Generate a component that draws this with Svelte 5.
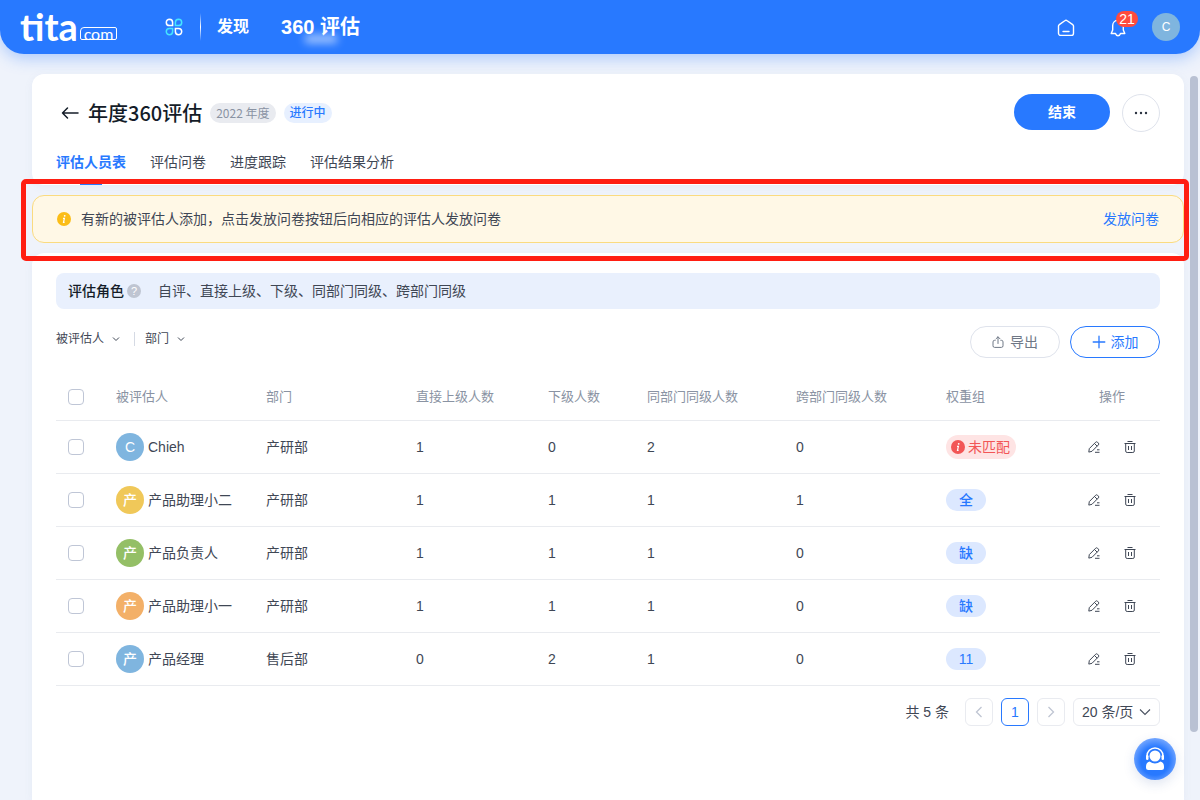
<script lang="ts">
	interface Person {
		name: string;
		initial: string;
		color: string;
		dept: string;
		counts: number[];
		group: string;
	}

	const tabs = ['评估人员表', '评估问卷', '进度跟踪', '评估结果分析'];
	const filters = ['被评估人', '部门'];
	const columns = ['被评估人', '部门', '直接上级人数', '下级人数', '同部门同级人数', '跨部门同级人数', '权重组'];

	const people: Person[] = [
		{ name: 'Chieh', initial: 'C', color: '#7fb5df', dept: '产研部', counts: [1, 0, 2, 0], group: '' },
		{ name: '产品助理小二', initial: '产', color: '#f0c859', dept: '产研部', counts: [1, 1, 1, 1], group: '全' },
		{ name: '产品负责人', initial: '产', color: '#94bf66', dept: '产研部', counts: [1, 1, 1, 0], group: '缺' },
		{ name: '产品助理小一', initial: '产', color: '#f3b068', dept: '产研部', counts: [1, 1, 1, 0], group: '缺' },
		{ name: '产品经理', initial: '产', color: '#7fb5df', dept: '售后部', counts: [0, 2, 1, 0], group: '11' },
	];

	let activeTab = $state(0);
	let selected: boolean[] = $state(people.map(() => false));
	let allSelected = $derived(selected.every(Boolean));

	function toggleAll() {
		const next = !allSelected;
		selected = selected.map(() => next);
	}
</script>

{#snippet chevron()}
	<svg class="chevron" width="8" height="8" viewBox="0 0 8 8" fill="none" stroke="currentColor"><path d="M1 2.5l3 3 3-3" /></svg>
{/snippet}

{#snippet infoDot(color)}
	<svg width="14" height="14" viewBox="0 0 14 14">
		<circle cx="7" cy="7" r="7" fill={color} />
		<circle cx="7.7" cy="3.8" r=".9" fill="#fff" />
		<path d="M6 6.3h1.4L6.500 10.3h1.1" fill="none" stroke="#fff" stroke-width="1.2" />
	</svg>
{/snippet}

<header class="topbar">
	<a class="logo" href="#home" aria-label="tita.com"><span class="logo-name">tita</span><span class="logo-com">com</span></a>
	<button class="icon-btn apps" aria-label="应用">
		<svg width="18" height="18" viewBox="0 0 18 18" fill="none" stroke-width="1.5">
			<path d="M4.5 1.2a3.2 3.2 0 1 0 0 6.4h3.1V4.4a3.2 3.2 0 0 0-3.1-3.2z" stroke="#fff" />
			<path d="M13.5 1.2a3.2 3.2 0 1 1 0 6.4h-3.1V4.4a3.2 3.2 0 0 1 3.1-3.2z" stroke="#45e5ff" />
			<path d="M4.5 16.8a3.2 3.2 0 1 1 0-6.4h3.1v3.2a3.2 3.2 0 0 1-3.1 3.2z" stroke="#45e5ff" />
			<path d="M13.5 16.8a3.2 3.2 0 1 0 0-6.4h-3.1v3.2a3.2 3.2 0 0 0 3.1 3.2z" stroke="#fff" />
		</svg>
	</button>
	<span class="topbar-line"></span>
	<nav class="topnav">
		<a href="#discover">发现</a>
		<a class="current" href="#review">360 评估</a>
	</nav>
	<div class="topbar-right">
		<button class="icon-btn" aria-label="主页">
			<svg width="18" height="20" viewBox="0 -2 18 20" fill="none" stroke="#fff" stroke-width="1.4" stroke-linecap="round" stroke-linejoin="round">
				<path d="M7.8 1.7L2.3 5.6a1.8 1.8 0 0 0-.8 1.5v7.1a2.2 2.2 0 0 0 2.2 2.2h10.6a2.2 2.2 0 0 0 2.2-2.2V7.1a1.8 1.8 0 0 0-.8-1.5L10.2 1.7a2 2 0 0 0-2.4 0z" />
				<path d="M6 12.5h6" />
			</svg>
		</button>
		<button class="icon-btn bell" aria-label="通知">
			<svg width="18" height="20" viewBox="0 -2 18 20" fill="none" stroke="#fff" stroke-width="1.4" stroke-linecap="round" stroke-linejoin="round">
				<path d="M9 1.3c-3.3 0-5.3 2.4-5.3 5.3v4.4L2.2 14.5h4.3c.4 1.4 1.3 2.2 2.5 2.2s2.1-.8 2.5-2.2h4.3L14.3 11V6.6c0-2.9-2-5.3-5.3-5.3z" />
			</svg>
			<span class="badge">21</span>
		</button>
		<span class="me">C</span>
	</div>
</header>

<main>
	<section class="card head-card">
		<div class="title-row">
			<button class="icon-btn" aria-label="返回">
				<svg width="18" height="14" viewBox="0 0 18 14" fill="none" stroke="#141c28" stroke-width="1.5" stroke-linecap="round" stroke-linejoin="round"><path d="M17 7H1.5M6.5 2L1.5 7l5 5" /></svg>
			</button>
			<h1>年度360评估</h1>
			<span class="tag grey">2022 年度</span>
			<span class="tag blue">进行中</span>
			<div class="title-actions">
				<button class="btn-primary">结束</button>
				<button class="btn-more" aria-label="更多">
					<svg width="14" height="4" viewBox="0 0 14 4" fill="#2b3340"><circle cx="2" cy="2" r="1.2" /><circle cx="7" cy="2" r="1.2" /><circle cx="12" cy="2" r="1.2" /></svg>
				</button>
			</div>
		</div>
		<nav class="tabs">
			{#each tabs as tab, i}
				<button class:active={activeTab === i} onclick={() => (activeTab = i)}>{tab}</button>
			{/each}
		</nav>
	</section>

	<div class="notice-wrap">
		<div class="notice">
			{@render infoDot('#fbbd17')}
			<span>有新的被评估人添加，点击发放问卷按钮后向相应的评估人发放问卷</span>
			<a href="#send">发放问卷</a>
		</div>
		<div class="highlight"></div>
	</div>

	<section class="card body-card">
		<div class="roles">
			<strong>评估角色</strong>
			<span class="help">?</span>
			<span>自评、直接上级、下级、同部门同级、跨部门同级</span>
		</div>

		<div class="toolbar">
			<div class="filters">
				{#each filters as filter}
					<button>{filter}{@render chevron()}</button>
				{/each}
			</div>
			<div class="actions">
				<button class="btn-outline">
					<svg width="12" height="12" viewBox="0 0 12 12" fill="none" stroke="currentColor" stroke-linecap="round" stroke-linejoin="round"><path d="M3.2 4.300H2.600A1.600 1.600 0 0 0 1 5.900v3.900a1.600 1.600 0 0 0 1.600 1.600h6.800A1.600 1.600 0 0 0 11 9.800V5.900a1.600 1.600 0 0 0-1.600-1.600h-.6M6 7.500V.9M4 2.800l2-2 2 2" /></svg>
					导出
				</button>
				<button class="btn-outline add">
					<svg width="14" height="14" viewBox="0 0 14 14" stroke="currentColor" stroke-width="1.3" stroke-linecap="round"><path d="M7 1.2v11.600M1.2 7h11.600" /></svg>
					添加
				</button>
			</div>
		</div>

		<table>
			<colgroup>
				<col class="w-check" />
				<col class="w-name" />
				<col class="w-dept" />
				<col class="w-up" />
				<col class="w-down" />
				<col class="w-peer" />
				<col class="w-cross" />
				<col class="w-group" />
				<col class="w-ops" />
			</colgroup>
			<thead>
				<tr>
					<th class="check"><input type="checkbox" aria-label="全选" checked={allSelected} onchange={toggleAll} /></th>
					{#each columns as column}
						<th>{column}</th>
					{/each}
					<th class="ops-head">操作</th>
				</tr>
			</thead>
			<tbody>
				{#each people as person, i}
					<tr>
						<td class="check"><input type="checkbox" aria-label={person.name} bind:checked={selected[i]} /></td>
						<td>
							<div class="person">
								<span class="avatar" style="background: {person.color}">{person.initial}</span>
								{person.name}
							</div>
						</td>
						<td>{person.dept}</td>
						{#each person.counts as count}
							<td>{count}</td>
						{/each}
						<td>
							{#if person.group}
								<span class="pill">{person.group}</span>
							{:else}
								<span class="pill unmatched">{@render infoDot('#f25656')}未匹配</span>
							{/if}
						</td>
						<td>
							<div class="ops">
								<button class="icon-btn" aria-label="编辑">
									<svg width="12" height="12" viewBox="0 0 12 12" fill="none" stroke="#3f4755" stroke-linejoin="round"><path d="M.8 11.100l.5-3.500L7.700 1.200a1.300 1.300 0 0 1 1.800 0l.9.9a1.300 1.300 0 0 1 0 1.800L4 10.300zM6.500 2.500l2.700 2.700M7 11.300h4.500M9 8.800h2.500" /></svg>
								</button>
								<button class="icon-btn" aria-label="删除">
									<svg width="12" height="12" viewBox="0 0 12 12" fill="none" stroke="#3f4755"><path d="M.5 2.500h11M3.500.5h5M1.700 2.500V10a1.500 1.500 0 0 0 1.500 1.500h5.600a1.500 1.500 0 0 0 1.500-1.500V2.500M4.500 5v4M7.500 5v4" /></svg>
								</button>
							</div>
						</td>
					</tr>
				{/each}
			</tbody>
		</table>

		<div class="pager">
			<span class="total">共 5 条</span>
			<button aria-label="上一页" disabled>
				<svg width="12" height="12" viewBox="0 0 12 12" fill="none" stroke="currentColor" stroke-width="1.3"><path d="M8.500 1L3.500 6l5 5" /></svg>
			</button>
			<button class="active">1</button>
			<button aria-label="下一页" disabled>
				<svg width="12" height="12" viewBox="0 0 12 12" fill="none" stroke="currentColor" stroke-width="1.3"><path d="M3.500 1l5 5-5 5" /></svg>
			</button>
			<div class="size">
				<select aria-label="每页条数">
					<option>20 条/页</option>
					<option>50 条/页</option>
				</select>
				<svg width="12" height="12" viewBox="0 0 12 12" fill="none" stroke="#4a5260" stroke-width="1.1"><path d="M1 3.500l5 5 5-5" /></svg>
			</div>
		</div>
	</section>
</main>

<div class="scrollbar"></div>

<button class="service" aria-label="客服">
	<svg width="20" height="24" viewBox="0 0 20 24" fill="none">
		<path d="M2 10V9a8 8 0 0 1 16 0v1" stroke="#fff" stroke-width="1.5" />
		<rect x="1" y="8" width="2.5" height="5" rx="1.2" fill="#fff" />
		<rect x="16.5" y="8" width="2.5" height="5" rx="1.2" fill="#fff" />
		<circle cx="10" cy="9" r="5.500" fill="#fff" />
		<path d="M4.500 14.500q5.500 4 11 0 3.500 1 3.500 5v1q0 2.500-2.500 2.500h-13Q1 23 1 20.500v-1q0-4 3.500-5z" fill="#fff" />
	</svg>
</button>

<style>
	:global(body) {
		background: #eff3fb;
		color: #3f4755;
		font: 14px/20px 'Liberation Sans', 'Noto Sans CJK SC', sans-serif;
	}

	:global(#app) {
		min-height: 100vh;
		display: flex;
		flex-direction: column;
	}

	* {
		box-sizing: border-box;
	}

	button,
	select {
		font: inherit;
		color: inherit;
		background: none;
		border: 0;
		padding: 0;
		cursor: pointer;
	}

	a {
		text-decoration: none;
	}

	svg {
		display: block;
		flex: none;
	}

	.icon-btn {
		display: flex;
	}

	.topbar {
		display: flex;
		align-items: center;
		height: 54px;
		padding: 0 20px;
		background: #2879ff;
		border-radius: 0 0 24px 24px;
		box-shadow: 0 4px 16px rgba(40, 121, 255, 0.35);
		color: #fff;
	}

	.logo {
		display: flex;
		align-items: flex-end;
		justify-content: space-between;
		width: 97px;
		height: 25px;
		color: #fff;
	}

	.logo-name {
		font: 700 38px/28px Lato, sans-serif;
	}

	.logo-com {
		width: 37px;
		border: 1px solid #fff;
		border-radius: 4px 2px 2px 2px;
		font: 16px/11px Lato, sans-serif;
		text-align: center;
	}

	.apps {
		margin-left: 48px;
	}

	.topbar-line {
		width: 1px;
		height: 28px;
		margin: 0 16px 0 17px;
		background: linear-gradient(transparent, #fff, transparent);
	}

	.topnav {
		display: flex;
		align-items: center;
		gap: 32px;
	}

	.topnav a {
		color: #fff;
		font-size: 16px;
		font-weight: 700;
	}

	.topnav .current {
		position: relative;
		font-size: 20px;
	}

	.topnav .current::after {
		content: '';
		position: absolute;
		left: 24px;
		bottom: -6px;
		width: 32px;
		height: 8px;
		background: rgba(255, 255, 255, 0.6);
		filter: blur(4px);
	}

	.topbar-right {
		display: flex;
		align-items: center;
		gap: 34px;
		margin-left: auto;
	}

	.bell {
		position: relative;
	}

	.badge {
		position: absolute;
		left: 7px;
		top: -6px;
		width: 22px;
		border-radius: 8px;
		background: #ff4b3e;
		font-size: 14px;
		line-height: 16px;
		text-align: center;
	}

	.me {
		width: 28px;
		margin-left: -9px;
		border-radius: 50%;
		background: #7fb5df;
		font-size: 12px;
		line-height: 28px;
		text-align: center;
	}

	main {
		flex: 1;
		display: flex;
		flex-direction: column;
		gap: 10px;
		padding: 20px 16px 0 32px;
	}

	.card {
		background: #fff;
		border-radius: 12px;
		box-shadow: 0 2px 8px rgba(120, 140, 180, 0.08);
	}

	.head-card {
		padding: 20px 24px 0;
	}

	.title-row {
		display: flex;
		align-items: center;
		gap: 8px;
		padding-left: 5px;
	}

	h1 {
		margin: 0 0 0 1px;
		color: #141c28;
		font: 500 20px/28px 'Noto Sans CJK SC', sans-serif;
	}

	.tag {
		padding: 0 6px;
		border-radius: 10px;
		font-size: 12px;
		line-height: 20px;
	}

	.tag.grey {
		background: #e9ebf0;
		color: #8a93a3;
		font-family: 'Noto Sans CJK SC', sans-serif;
	}

	.tag.blue {
		background: #e7f0ff;
		color: #2879ff;
		font-weight: 500;
	}

	.title-actions {
		display: flex;
		gap: 12px;
		margin-left: auto;
	}

	.btn-primary {
		width: 96px;
		height: 36px;
		border-radius: 18px;
		background: #2879ff;
		color: #fff;
		font-weight: 700;
	}

	.btn-more {
		display: flex;
		align-items: center;
		justify-content: center;
		width: 38px;
		height: 38px;
		border: 1px solid #dfe3ec;
		border-radius: 50%;
	}

	.tabs {
		display: flex;
		gap: 24px;
		margin-top: 19px;
	}

	.tabs button {
		height: 34px;
		padding-bottom: 12px;
	}

	.tabs .active {
		color: #2879ff;
		font-weight: 700;
		background: linear-gradient(#2879ff, #2879ff) center bottom / 22px 3px no-repeat;
	}

	.notice-wrap {
		position: relative;
	}

	.notice {
		display: flex;
		align-items: center;
		gap: 10px;
		height: 48px;
		padding: 0 24px;
		border: 1px solid #fadb80;
		border-radius: 12px;
		background: #fff8e6;
	}

	.notice a {
		margin-left: auto;
		color: #2879ff;
	}

	/* Marker frame around the notice */
	.highlight {
		position: absolute;
		inset: -16px -5px -18px -11px;
		border: 5px solid #ff1e12;
		border-radius: 5px;
		pointer-events: none;
	}

	.body-card {
		flex: 1;
		padding: 20px 24px 72px;
		border-radius: 12px 12px 0 0;
	}

	.roles {
		display: flex;
		align-items: center;
		height: 36px;
		padding: 0 12px;
		border-radius: 8px;
		background: #e9f0fd;
	}

	.roles strong {
		color: #141c28;
		font-weight: 500;
	}

	.help {
		width: 14px;
		margin: 0 17px 0 3px;
		border-radius: 50%;
		background: #bfc5d2;
		color: #fff;
		font-size: 11px;
		line-height: 14px;
		text-align: center;
	}

	.toolbar {
		display: flex;
		justify-content: space-between;
		margin: 17px 0;
	}

	.filters {
		display: flex;
		align-items: center;
		height: 26px;
		font-size: 12px;
	}

	.filters button {
		display: flex;
		align-items: center;
		gap: 8px;
		height: 14px;
	}

	.filters button + button {
		margin-left: 14px;
		padding-left: 10px;
		border-left: 1px solid #d5dae4;
	}

	.actions {
		display: flex;
		gap: 10px;
	}

	.btn-outline {
		display: flex;
		align-items: center;
		justify-content: center;
		gap: 6px;
		width: 90px;
		height: 32px;
		border: 1px solid #dfe3ec;
		border-radius: 16px;
		color: #6f7886;
	}

	.btn-outline.add {
		gap: 5px;
		border-color: #2879ff;
		color: #2879ff;
	}

	table {
		width: 100%;
		border-collapse: collapse;
		table-layout: fixed;
	}

	.w-check { width: 60px; }
	.w-name { width: 150px; }
	.w-dept { width: 150px; }
	.w-up { width: 132px; }
	.w-down { width: 99px; }
	.w-peer { width: 149px; }
	.w-cross { width: 150px; }
	.w-group { width: 142px; }
	.w-ops { width: 72px; }

	th,
	td {
		height: 53px;
		padding: 0;
		border-bottom: 1px solid #e9ebef;
		text-align: left;
		white-space: nowrap;
	}

	th {
		height: 45px;
		color: #8a93a3;
		font-size: 13px;
		font-weight: 400;
	}

	.check {
		padding-left: 12px;
	}

	.ops-head {
		padding-left: 11px;
	}

	input[type='checkbox'] {
		appearance: none;
		display: block;
		width: 16px;
		height: 16px;
		margin: 0;
		border: 1px solid #bfc6d6;
		border-radius: 4px;
		background: #fff;
	}

	input[type='checkbox']:checked {
		border-color: #2879ff;
		background: #2879ff;
	}

	.person {
		display: flex;
		align-items: center;
		gap: 4px;
	}

	.avatar {
		width: 28px;
		border-radius: 50%;
		color: #fff;
		font-weight: 500;
		line-height: 28px;
		text-align: center;
	}

	.pill {
		display: inline-flex;
		align-items: center;
		justify-content: center;
		min-width: 40px;
		height: 22px;
		border-radius: 12px;
		background: #dce8ff;
		color: #2879ff;
		font-weight: 500;
		vertical-align: middle;
	}

	.pill.unmatched {
		gap: 3px;
		height: 24px;
		padding: 0 6px 0 5px;
		background: #fee4e4;
		color: #f25656;
		font-weight: 400;
	}

	.ops {
		display: flex;
		gap: 24px;
	}

	.pager {
		display: flex;
		align-items: center;
		justify-content: flex-end;
		gap: 8px;
		margin-top: 12px;
	}

	.total {
		margin-right: 8px;
	}

	.pager button {
		display: flex;
		align-items: center;
		justify-content: center;
		width: 28px;
		height: 28px;
		border: 1px solid #e9ebf0;
		border-radius: 6px;
		color: #bfc5d2;
	}

	.pager button.active {
		border-color: #2879ff;
		color: #2879ff;
	}

	.size {
		display: grid;
		align-items: center;
	}

	.size select,
	.size svg {
		grid-area: 1 / 1;
	}

	.size select {
		appearance: none;
		width: 87px;
		height: 28px;
		padding-left: 8px;
		border: 1px solid #e9ebf0;
		border-radius: 6px;
	}

	.size svg {
		justify-self: end;
		margin-right: 9px;
		pointer-events: none;
	}

	.scrollbar {
		position: fixed;
		top: 76px;
		right: 2px;
		width: 8px;
		height: 82vh;
		border-radius: 4px;
		background: #b9c1d3;
	}

	.service {
		position: fixed;
		right: 24px;
		bottom: 20px;
		display: flex;
		align-items: center;
		justify-content: center;
		width: 42px;
		height: 42px;
		border-radius: 50%;
		background: radial-gradient(circle at 50% 55%, #2879ff 45%, #78a9ff 75%);
		box-shadow: 0 4px 12px rgba(40, 80, 160, 0.15);
	}
</style>
